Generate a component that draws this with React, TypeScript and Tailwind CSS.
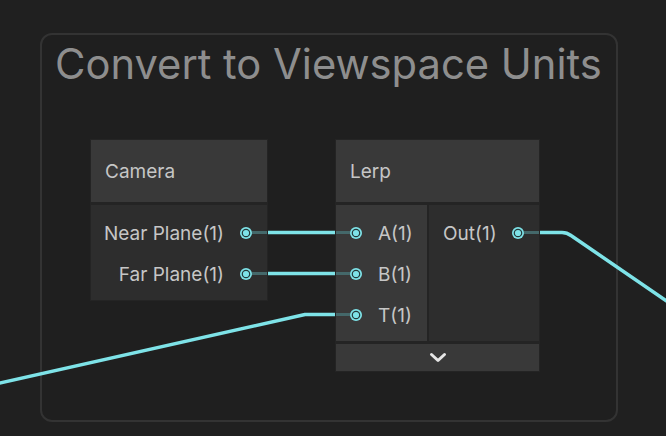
import React from "react";

const CYAN = "#7ee3e8";

function Port() {
  return (
    <svg width="12" height="12" viewBox="0 0 12 12" className="shrink-0">
      <circle cx="6" cy="6" r="6" fill={CYAN} />
      <circle cx="6" cy="6" r="4.3" fill="#24393a" />
      <circle cx="6" cy="6" r="3.1" fill={CYAN} />
    </svg>
  );
}

function Stub({ w }: { w: number }) {
  return <div className="h-[3px] bg-[#44686a]" style={{ width: w }} />;
}

export default function App() {
  return (
    <div
      className="relative w-[666px] h-[436px] overflow-hidden bg-[#202020] text-[#c6c6c6]"
      style={{ fontFamily: "Inter, 'Noto Sans', sans-serif" }}
    >
      {/* group box */}
      <div className="absolute left-[40px] top-[33px] w-[578px] h-[389px] rounded-[12px] border-2 border-[#333333] bg-[#1f1f1f]">
        <div className="pl-[13px] pt-[0px] text-[41.7px] leading-[58px] text-[#8e8e8e] whitespace-nowrap">
          Convert to Viewspace Units
        </div>
      </div>

      {/* wires */}
      <svg className="absolute left-0 top-0" width="666" height="436" viewBox="0 0 666 436">
        <g stroke={CYAN} strokeWidth="3.5" fill="none" strokeLinejoin="round">
          <path d="M266 232.5 H337" />
          <path d="M266 273.5 H337" />
          <path d="M-2 383.5 L305 314.5 H337" />
          <path d="M538 232.5 H562 Q567 232.5 571 235.5 L668 302" />
        </g>
      </svg>

      {/* Camera node */}
      <div className="absolute left-[90px] top-[139px] w-[178px] flex flex-col bg-[#242424] p-[1px] gap-[3px]">
        <div className="h-[62px] bg-[#393939] flex items-center pl-[14px] pt-[3px] text-[19px]">Camera</div>
        <div className="bg-[#2d2d2d] pt-[7px] pb-[6px] flex flex-col">
          {["Near Plane(1)", "Far Plane(1)"].map((t) => (
            <div key={t} className="h-[41px] flex items-center justify-end text-[19px]">
              <span className="mr-[16px] pt-[3px]">{t}</span>
              <Port />
              <Stub w={15} />
            </div>
          ))}
        </div>
      </div>

      {/* Lerp node */}
      <div className="absolute left-[335px] top-[139px] w-[205px] flex flex-col bg-[#242424] p-[1px] gap-[3px]">
        <div className="h-[62px] bg-[#393939] flex items-center pl-[14px] pt-[3px] text-[19px]">Lerp</div>
        <div className="flex gap-[2px]">
          <div className="w-[91px] bg-[#393939] pt-[7px] pb-[6px] flex flex-col">
            {["A(1)", "B(1)", "T(1)"].map((t) => (
              <div key={t} className="h-[41px] flex items-center text-[19px]">
                <Stub w={14} />
                <Port />
                <span className="ml-[16px] pt-[3px]">{t}</span>
              </div>
            ))}
          </div>
          <div className="flex-1 bg-[#2d2d2d] pt-[7px]">
            <div className="h-[41px] flex items-center text-[19px]">
              <span className="ml-[14px] pt-[3px]">Out(1)</span>
              <div className="flex-1" />
              <Port />
              <Stub w={15} />
            </div>
          </div>
        </div>
        <div className="h-[27px] bg-[#393939] flex items-center justify-center">
          <svg width="18" height="11" viewBox="0 0 18 11">
            <path d="M2.5 2.5 L9 8.5 L15.5 2.5" stroke="#e6e6e6" strokeWidth="3" fill="none" strokeLinecap="round" strokeLinejoin="round" />
          </svg>
        </div>
      </div>
    </div>
  );
}
